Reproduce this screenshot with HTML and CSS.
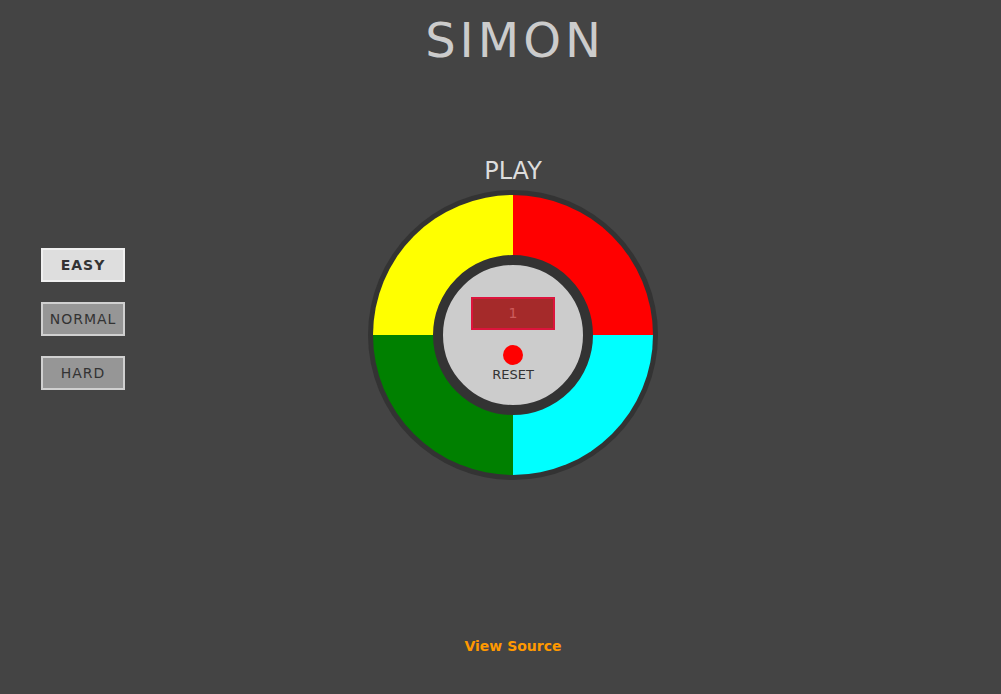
FILE: index.html
```html
<!DOCTYPE html>
<html>
<head>
<meta charset="utf-8">
<link rel="stylesheet" href="styles.css">
</head>
<body>
<div class="page">
  <h1 class="title">SIMON</h1>
  <div class="main">
    <aside class="modes">
      <button class="mode active">EASY</button>
      <button class="mode">NORMAL</button>
      <button class="mode">HARD</button>
    </aside>
    <section class="game">
      <div class="play">PLAY</div>
      <div class="board">
        <div class="pads">
          <div class="pad yellow"></div>
          <div class="pad red"></div>
          <div class="pad green"></div>
          <div class="pad cyan"></div>
        </div>
        <div class="hub">
          <div class="count">1</div>
          <div class="reset-dot"></div>
          <div class="reset-label">RESET</div>
        </div>
      </div>
    </section>
    <div class="spacer"></div>
  </div>
  <footer class="foot"><a class="source" href="#">View Source</a></footer>
</div>
</body>
</html>
```
FILE: styles.css
```css
html, body {
  margin: 0;
  padding: 0;
  background: #444444;
  height: 100%;
}
body {
  font-family: "Comic Sans MS", "DejaVu Sans", sans-serif;
  color: #cccccc;
}
.page {
  padding-left: 25px;
  height: 694px;
  display: flex;
  flex-direction: column;
}
.title {
  margin: 0;
  padding-top: 10px;
  text-align: center;
  font-size: 48px;
  font-weight: normal;
  line-height: 60px;
  color: #cccccc;
  letter-spacing: 4px;
  text-indent: 4px;
}
.main {
  display: grid;
  grid-template-columns: 1fr 290px 1fr;
  margin-top: 84px;
}
.modes {
  display: flex;
  flex-direction: column;
  gap: 20px;
  padding-left: 16px;
  padding-top: 94px;
}
.mode {
  width: 84px;
  height: 34px;
  border: 2px solid #d0d0d0;
  background: #969696;
  color: #333333;
  font-family: "Comic Sans MS", "DejaVu Sans", sans-serif;
  font-size: 14px;
  letter-spacing: 1px;
  padding: 0;
}
.mode.active {
  background: #dedede;
  border-color: #f0f0f0;
  font-weight: bold;
}
.game {
  display: flex;
  flex-direction: column;
  align-items: center;
}
.play {
  font-size: 24px;
  line-height: 30px;
  color: #dddddd;
  margin-top: 2px;
  margin-bottom: 4px;
}
.board {
  position: relative;
  width: 290px;
  height: 290px;
  box-sizing: border-box;
  padding: 5px;
  border-radius: 50%;
  background: #333333;
}
.pads {
  width: 280px;
  height: 280px;
  border-radius: 50%;
  overflow: hidden;
  display: grid;
  grid-template-columns: 1fr 1fr;
  grid-template-rows: 1fr 1fr;
}
.yellow { background: #ffff00; }
.red { background: #ff0000; }
.green { background: #008000; }
.cyan { background: #00ffff; }
.hub {
  position: absolute;
  left: 65px;
  top: 65px;
  width: 160px;
  height: 160px;
  box-sizing: border-box;
  border: 10px solid #333333;
  border-radius: 50%;
  background: #cccccc;
  display: flex;
  flex-direction: column;
  align-items: center;
  padding-top: 32px;
}
.count {
  width: 84px;
  height: 33px;
  box-sizing: border-box;
  border: 2px solid #dc143c;
  background: #a52a2a;
  color: #cd5c5c;
  font-size: 14px;
  line-height: 29px;
  text-align: center;
}
.reset-dot {
  width: 20px;
  height: 20px;
  border-radius: 50%;
  background: #ff0000;
  margin-top: 15px;
}
.reset-label {
  font-size: 13px;
  line-height: 20px;
  color: #333333;
}
.foot {
  margin-top: auto;
  padding-bottom: 39px;
  text-align: center;
}
.source {
  color: #ff9900;
  font-weight: bold;
  font-size: 14px;
  text-decoration: none;
}
```
